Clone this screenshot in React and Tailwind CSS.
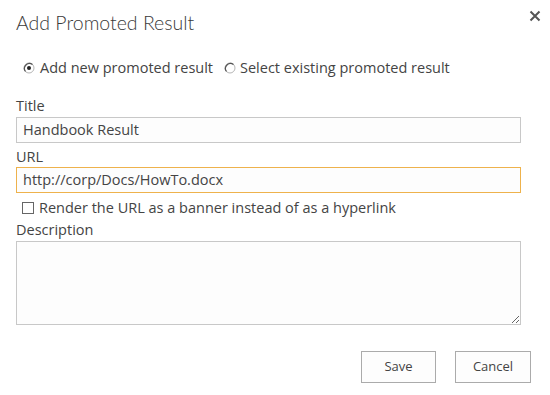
import React from "react";

function Radio({ checked }) {
  return (
    <svg width="12" height="12" viewBox="0 0 12 12" className="shrink-0">
      <circle cx="6" cy="6" r="5" fill="#fff" stroke="#b5b5b5" strokeWidth="1" />
      <path d="M2.5 9.5 A5 5 0 0 1 9.5 2.5" fill="none" stroke="#555" strokeWidth="1.2" />
      {checked && <circle cx="6" cy="6" r="2" fill="#222" />}
    </svg>
  );
}

export default function App() {
  return (
    <div
      className="w-[550px] h-[395px] bg-white text-[#444] flex flex-col"
      style={{ fontFamily: '"Open Sans", "Noto Sans", sans-serif' }}
    >
      <div className="flex items-start justify-between pl-4 pr-[7px]">
        <h1
          className="mt-[9px] text-[19.5px] leading-[28px] font-light text-[#3a3a3a]"
          style={{ fontFamily: 'Lato, "Open Sans", sans-serif' }}
        >
          Add Promoted Result
        </h1>
        <button className="mt-[9px] w-[16px] h-[14px] flex items-center justify-center">
          <svg width="12" height="12" viewBox="0 0 12 12">
            <path d="M1.5 1.5 L10.5 10.5 M10.5 1.5 L1.5 10.5" stroke="#555" strokeWidth="2" />
          </svg>
        </button>
      </div>

      <div className="px-4">
        <div className="mt-[23px] flex items-center h-[16px] text-[14.5px] leading-[16px] pl-[7px]">
          <Radio checked />
          <span className="ml-[5px]">Add new promoted result</span>
          <span className="ml-[11px]"><Radio /></span>
          <span className="ml-[4px]">Select existing promoted result</span>
        </div>

        <div className="mt-[22px] text-[14.5px] leading-[16px]">Title</div>
        <div className="mt-[3px] w-[505px] h-[26px] border border-[#c8c8c8] bg-[#fdfdfd] px-[6px] flex items-center text-[14.5px]">
          Handbook Result
        </div>

        <div className="mt-[6px] text-[14.5px] leading-[16px]">URL</div>
        <div className="mt-[2px] w-[505px] h-[26px] border border-[#eeb24c] bg-[#fdfdfd] px-[6px] flex items-center text-[14.5px]">
          http://corp/Docs/HowTo.docx
        </div>

        <div className="mt-[7px] flex items-center h-[16px] text-[14.5px] leading-[16px] pl-[6px]">
          <span className="w-[12px] h-[12px] border border-[#666] bg-white shrink-0" />
          <span className="ml-[5px]">Render the URL as a banner instead of as a hyperlink</span>
        </div>

        <div className="mt-[6px] text-[14.5px] leading-[16px]">Description</div>
        <textarea
          readOnly
          className="mt-[3px] block w-[505px] h-[84px] border border-[#c8c8c8] bg-[#fdfdfd] outline-none"
        />

        <div className="mt-[26px] flex justify-end gap-[19px] pr-[3px]">
          <button className="w-[75px] h-[32px] border border-[#ababab] bg-[#fdfdfd] text-[13px] text-[#444]">
            Save
          </button>
          <button className="w-[76px] h-[32px] border border-[#ababab] bg-[#fdfdfd] text-[13px] text-[#444]">
            Cancel
          </button>
        </div>
      </div>
    </div>
  );
}
